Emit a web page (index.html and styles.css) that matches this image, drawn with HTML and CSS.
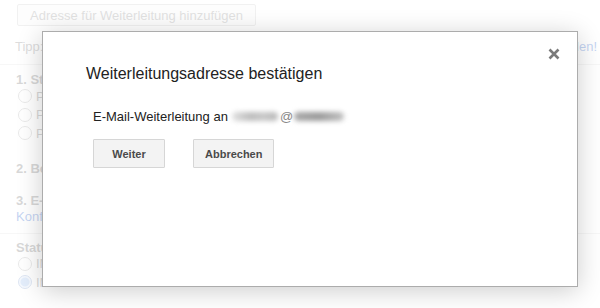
FILE: index.html
```html
<!DOCTYPE html>
<html lang="de">
<head>
  <meta charset="UTF-8">
  <title>Weiterleitung</title>
  <link rel="stylesheet" href="styles.css">
</head>
<body>
  <div class="page">
    <div class="toolbar">
      <button class="add-button">Adresse für Weiterleitung hinzufügen</button>
    </div>

    <div class="tip">
      <span>Tipp: Sie können auch nur einige Ihrer E-Mails weiterleiten, indem Sie einen</span>
      <a href="#" class="link">Filter erstellen!</a>
    </div>

    <div class="block">
      <div class="heading">1. Status: POP ist deaktiviert</div>
      <label class="radio"><span class="radio-dot"></span>POP für alle E-Mails aktivieren</label>
      <label class="radio"><span class="radio-dot"></span>POP für alle ab jetzt eingehenden E-Mails aktivieren</label>
      <label class="radio"><span class="radio-dot"></span>POP deaktivieren</label>
    </div>

    <div class="heading gap">2. Bei Zugriff auf Nachrichten über POP</div>

    <div class="heading gap-small">3. E-Mail-Client konfigurieren</div>
    <a href="#" class="link">Konfigurationsanleitung</a>

    <div class="block divided">
      <div class="heading">Status: IMAP ist aktiviert</div>
      <label class="radio"><span class="radio-dot"></span>IMAP aktivieren</label>
      <label class="radio"><span class="radio-dot checked"></span>IMAP deaktivieren</label>
    </div>
  </div>

  <div class="veil"></div>

  <div class="dialog">
    <svg class="dialog-close" width="12" height="12" viewBox="0 0 12 12">
      <path d="M1.5 1.5 L10.5 10.5 M10.5 1.5 L1.5 10.5" stroke="#7a7a7a" stroke-width="2.6"/>
    </svg>
    <h2 class="dialog-title">Weiterleitungsadresse bestätigen</h2>
    <div class="dialog-body">
      <p class="dialog-text">
        E-Mail-Weiterleitung an
        <span class="masked"><span class="blur-name"></span>@<span class="blur-domain"></span></span>
      </p>
      <div class="dialog-buttons">
        <button class="dialog-button">Weiter</button>
        <button class="dialog-button">Abbrechen</button>
      </div>
    </div>
  </div>
</body>
</html>
```

FILE: styles.css
```css
body {
  margin: 0;
  width: 600px;
  height: 308px;
  overflow: hidden;
  font-family: 'Liberation Sans', Arial, sans-serif;
  font-size: 13px;
  color: #222;
  background: #fff;
}

.page {
  padding: 4px 0 0 0;
}

.toolbar {
  padding-left: 17px;
  height: 30px;
}

.add-button {
  height: 22px;
  padding: 0 12px;
  border: 1px solid #c8c8c8;
  border-radius: 2px;
  background: #f5f5f5;
  font-family: 'Liberation Sans', Arial, sans-serif;
  font-size: 13px;
  color: #888;
}

.tip {
  display: flex;
  justify-content: space-between;
  padding: 5px 3px 10px 15px;
  border-bottom: 1px solid #ddd;
  white-space: nowrap;
  color: #777;
  line-height: 15px;
}

.link {
  color: #1155cc;
  text-decoration: none;
}

.block {
  padding: 8px 0 0 16px;
}

.heading {
  font-weight: bold;
  color: #666;
  line-height: 14px;
  padding-left: 16px;
}

.block .heading {
  padding-left: 0;
}

.gap {
  margin-top: 18px;
  line-height: 16px;
}

.gap-small {
  margin-top: 16px;
  line-height: 16px;
}

.page > .link {
  display: block;
  padding-left: 16px;
  line-height: 15px;
}

.radio {
  display: flex;
  align-items: center;
  height: 18.5px;
  color: #666;
}

.radio-dot {
  width: 12px;
  height: 12px;
  margin: 0 4px 0 2px;
  border: 1px solid #aaa;
  border-radius: 50%;
  background: #fff;
}

.radio-dot.checked {
  background: radial-gradient(circle, #8fb6ef 0 4px, #dce8fb 5px);
  border-color: #7a9bd0;
}

.divided {
  margin-top: 9px;
  padding-top: 7px;
  border-top: 1px solid #ddd;
}

.veil {
  position: absolute;
  inset: 0;
  background: rgba(255, 255, 255, 0.75);
}

.dialog {
  position: absolute;
  left: 42px;
  top: 31px;
  width: 534px;
  height: 254px;
  background: #fff;
  border: 1px solid #acacac;
  box-shadow: 0 4px 24px rgba(0, 0, 0, 0.2);
}

.dialog-close {
  position: absolute;
  top: 16px;
  right: 17px;
}

.dialog-title {
  margin: 33px 0 0 43px;
  font-size: 16px;
  font-weight: normal;
  line-height: 18px;
  color: #222;
}

.dialog-body {
  padding-left: 50px;
}

.dialog-text {
  margin: 26px 0 0 0;
  line-height: 15px;
  color: #222;
  display: flex;
  align-items: center;
  gap: 4px;
}

.masked {
  display: inline-flex;
  align-items: center;
  color: #888;
}

.blur-name {
  display: inline-block;
  width: 46px;
  height: 9px;
  margin-right: 2px;
  border-radius: 5px;
  background: linear-gradient(90deg, #e0e0e0, #bdbdbd 40%, #c8c8c8 70%, #b5b5b5);
  filter: blur(2.5px);
}

.blur-domain {
  display: inline-block;
  width: 50px;
  height: 9px;
  margin-left: 1px;
  border-radius: 5px;
  background: linear-gradient(90deg, #a8a8a8, #9a9a9a 50%, #c0c0c0);
  filter: blur(2.5px);
}

.dialog-buttons {
  display: flex;
  gap: 28px;
  margin-top: 15px;
}

.dialog-button {
  min-width: 72px;
  height: 29px;
  padding: 0 11px;
  border: 1px solid #d6d6d6;
  border-radius: 1px;
  background: #f3f3f3;
  font-family: 'Liberation Sans', Arial, sans-serif;
  font-size: 11px;
  font-weight: bold;
  color: #4a4a4a;
}
```
